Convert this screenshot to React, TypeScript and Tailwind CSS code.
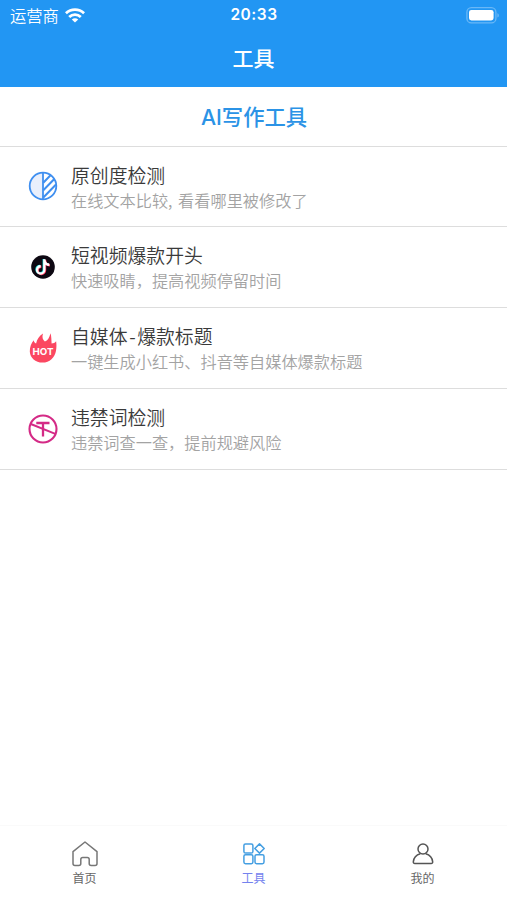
import type { ReactNode } from 'react'

type Tool = {
  title: ReactNode
  desc: string
  icon: ReactNode
}

type Tab = {
  label: string
  icon: ReactNode
  labelColor: string
}

function WifiIcon() {
  return (
    <svg width="20" height="15" viewBox="0 0 20 15" fill="none" stroke="#fff" strokeWidth="2.8">
      <path d="M0.9 5.3C6 0.4 14 0.4 19.1 5.3" />
      <path d="M4.2 9C7.5 5.9 12.5 5.9 15.8 9" />
      <path d="M10 14.6L6.8 11.6C8.6 9.9 11.4 9.9 13.2 11.6Z" fill="#fff" stroke="none" />
    </svg>
  )
}

function BatteryIcon() {
  return (
    <svg width="34" height="17" viewBox="0 0 34 17">
      <rect x="0.9" y="0.7" width="29" height="15.2" rx="4.5" fill="none" stroke="#fff" strokeOpacity="0.32" strokeWidth="1.3" />
      <rect x="3" y="2.9" width="24.6" height="10.6" rx="2.4" fill="#fff" />
      <path d="M31.5 6.2c1.6.6 1.6 3.8 0 4.4z" fill="#fff" fillOpacity="0.4" />
    </svg>
  )
}

function CompareIcon() {
  return (
    <svg width="30" height="30" viewBox="0 0 30 30" fill="none" stroke="#3f8ff0" strokeWidth="1.8">
      <path d="M15 1.5a13.5 13.5 0 0 0 0 27z" fill="#e9effc" stroke="none" />
      <circle cx="15" cy="15" r="13.3" />
      <path d="M15 1.5v27" />
      <path d="M15.3 11.8L22.5 4.3M15.3 19.3L26.3 8M15.3 26.5L28 13.5" strokeWidth="2" />
    </svg>
  )
}

function TikTokIcon() {
  const note = 'M14.5 5h-2.3v10.6a2.5 2.5 0 1 1-2.5-2.5v-2.3a4.8 4.8 0 1 0 4.8 4.8v-5.2c1.1.8 2.4 1.2 3.8 1.2V9.3c-2.2 0-3.7-1.7-3.8-4.3z'
  return (
    <svg width="24" height="24" viewBox="0 0 24 24">
      <circle cx="12" cy="12" r="11.8" fill="#0d0812" />
      <g transform="translate(0 -.7)">
        <path d={note} fill="#25f4ee" transform="translate(-.6 -.4)" />
        <path d={note} fill="#fe2c55" transform="translate(.7 .5)" />
        <path d={note} fill="#fff" />
      </g>
    </svg>
  )
}

function HotIcon() {
  return (
    <svg width="28" height="30" viewBox="0 0 28 30">
      <path
        d="M13.5 29.6C6.5 29.6 1 25 .8 18.5c-.1-4.5 1.5-8.6 4-11.3.2 1.7.8 2.6 2.3 3.2C8 6.3 10 2.9 14 .4c-1.2 3.6-.3 6 1.9 8.2 2.8-1.2 4.5-3.9 5.6-8.4 1 3.3.9 7 1.1 10.3 1.9-.1 3.4-.9 4.5-2.3.5 3 .5 6-.1 9.5-1.2 6.9-6.3 11.9-13.5 11.9z"
        fill="#fb4761"
      />
      <text x="14" y="22" textAnchor="middle" fill="#fff" fontFamily="Inter, sans-serif" fontSize="9.6" fontWeight="700" textLength="21" lengthAdjust="spacingAndGlyphs">
        HOT
      </text>
    </svg>
  )
}

function ForbiddenIcon() {
  return (
    <svg width="30" height="30" viewBox="0 0 30 30" fill="none" stroke="#d42a86">
      <circle cx="15" cy="15" r="13.5" strokeWidth="2.1" />
      <path d="M8.3 9h13.2M15 9v13.5" strokeWidth="2.3" />
      <path d="M2.8 10L27.3 19.8" strokeWidth="1.9" />
    </svg>
  )
}

function HomeIcon() {
  return (
    <svg width="26" height="26" viewBox="0 0 26 26" fill="none" stroke="#777" strokeWidth="1.5" strokeLinejoin="round">
      <path d="M1 10.6L13 1l12 9.6V22.5q0 2-2 2h-3.8q-2 0-2-2V18.5q0-2-2-2h-4.4q-2 0-2 2v4q0 2-2 2H3q-2 0-2-2z" />
    </svg>
  )
}

function GridIcon() {
  return (
    <svg width="22" height="22" viewBox="0 0 22 22" fill="none" stroke="#459fe2" strokeWidth="1.5">
      <rect x="0.9" y="1" width="9" height="9" rx="1.6" />
      <rect x="0.9" y="11.7" width="9" height="9" rx="1.6" />
      <rect x="12" y="11.7" width="9" height="9" rx="1.6" />
      <path d="M16.5 .9L21.2 5.5L16.5 10.1L11.8 5.5z" strokeLinejoin="round" />
    </svg>
  )
}

function UserIcon() {
  return (
    <svg width="22" height="22" viewBox="0 0 22 22" fill="none" stroke="#555" strokeWidth="1.5">
      <circle cx="11" cy="6" r="5" />
      <path d="M8.3 10.8C4.3 12 1.7 15 1.3 18.8q-.1 1.7 1.6 1.7h16.2q1.7 0 1.6-1.7C20.3 15 17.7 12 13.7 10.8" />
    </svg>
  )
}

const TOOLS: Tool[] = [
  { title: '原创度检测', desc: '在线文本比较, 看看哪里被修改了', icon: <CompareIcon /> },
  { title: '短视频爆款开头', desc: '快速吸睛\uff0c提高视频停留时间', icon: <TikTokIcon /> },
  {
    title: (
      <>
        自媒体<span className="px-[1.6px]">-</span>爆款标题
      </>
    ),
    desc: '一键生成小红书、抖音等自媒体爆款标题',
    icon: <HotIcon />,
  },
  { title: '违禁词检测', desc: '违禁词查一查\uff0c提前规避风险', icon: <ForbiddenIcon /> },
]

const TABS: Tab[] = [
  { label: '首页', icon: <HomeIcon />, labelColor: 'text-[#666]' },
  { label: '工具', icon: <GridIcon />, labelColor: 'text-[#7482ee]' },
  { label: '我的', icon: <UserIcon />, labelColor: 'text-[#666]' },
]

export default function App() {
  return (
    <div className="flex h-[900px] w-[507px] flex-col overflow-hidden bg-white font-['Noto_Sans_CJK_SC',sans-serif]">
      {/* Status bar + nav title */}
      <header className="h-[87px] shrink-0 bg-[#2296f3] text-white">
        <div className="grid h-[29px] grid-cols-3 items-center pl-[10px] pr-[7px]">
          <div className="flex items-center gap-[6px]">
            <span className="text-[16.3px] font-[350] leading-[29px]">运营商</span>
            <WifiIcon />
          </div>
          <span className="pr-[2px] text-center font-['Inter',sans-serif] text-[15.5px] font-semibold leading-[30px] tracking-[0.5px]">20:33</span>
          <div className="flex justify-end">
            <BatteryIcon />
          </div>
        </div>
        <h1 className="text-center text-[21px] font-medium leading-[56px]">工具</h1>
      </header>

      <h2 className="h-[59.5px] shrink-0 border-b border-[#ddd] pl-[1px] text-center text-[21.3px] font-medium leading-[58px] text-[#2b93e6]">
        <span className="font-['Inter',sans-serif]">AI</span>写作工具
      </h2>

      {/* Tool list */}
      <ul>
        {TOOLS.map((tool, i) => (
          <li key={i} className="flex h-[80.8px] border-b border-[#ddd]">
            <div className="flex w-[71px] items-center justify-center pl-[14px]">{tool.icon}</div>
            <div className="pt-[15px]">
              <div className="text-[18.85px] font-[350] leading-[26px] text-[#3a3a3a]">{tool.title}</div>
              <div className="text-[16.2px] font-[350] leading-[24.5px] text-[#a3a3a3] [word-spacing:2px]">{tool.desc}</div>
            </div>
          </li>
        ))}
      </ul>

      {/* Bottom tabs */}
      <nav className="mt-auto grid h-[75px] grid-cols-3 border-t border-[#fafafa]">
        {TABS.map((tab) => (
          <div key={tab.label} className="flex flex-col items-center pt-[14px]">
            <div className="flex h-[28px] items-center">{tab.icon}</div>
            <span className={`text-[12px] leading-[19px] ${tab.labelColor}`}>{tab.label}</span>
          </div>
        ))}
      </nav>
    </div>
  )
}
